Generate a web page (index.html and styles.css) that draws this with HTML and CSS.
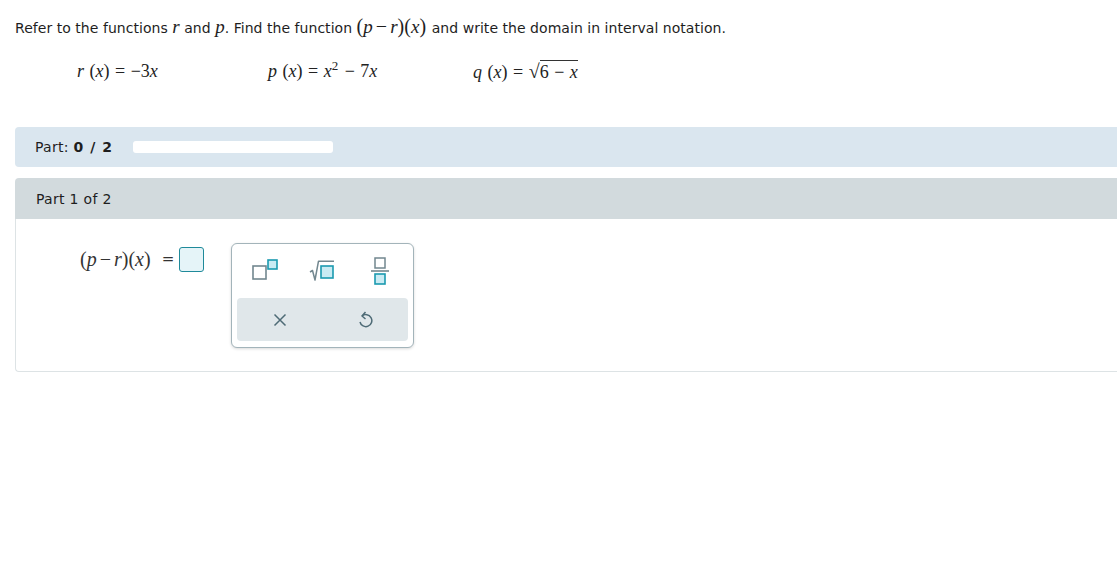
FILE: index.html
```html
<!DOCTYPE html>
<html>
<head>
<meta charset="utf-8">
<link rel="stylesheet" href="styles.css">
</head>
<body>
<div class="page">
  <p class="prompt">Refer to the functions <span class="mi">r</span> and <span class="mi">p</span>. Find the function <span class="m">(<span class="mi">p</span><span class="op">−</span><span class="mi">r</span>)(<span class="mi">x</span>)</span> and write the domain in interval notation.</p>

  <div class="eqs">
    <div class="eq eq1"><i>r</i> (<i>x</i>) = −3<i>x</i></div>
    <div class="eq eq2"><i>p</i> (<i>x</i>) = <i>x</i><sup>2</sup> − 7<i>x</i></div>
    <div class="eq eq3"><i>q</i> (<i>x</i>) = <span class="rad">√</span><span class="radicand">6 − <i>x</i></span></div>
  </div>

  <div class="partbar">
    <span class="partlabel">Part: <b>0 / 2</b></span>
    <span class="progress"></span>
  </div>

  <div class="part">
    <div class="parthead">Part 1 of 2</div>
    <div class="partbody">
      <div class="answer">
        <span class="lhs">(<i>p</i><span class="op">−</span><i>r</i>)(<i>x</i>)</span>
        <span class="eqsign">=</span>
        <span class="inbox"></span>
      </div>
      <div class="keypad">
        <div class="keys">
          <span class="key">
            <svg width="28" height="24" viewBox="0 0 28 24">
              <rect x="1" y="7" width="13" height="13" fill="#fff" stroke="#72878f" stroke-width="1.6"/>
              <rect x="16" y="1" width="9" height="9" fill="#c9ebf3" stroke="#1b9ab0" stroke-width="1.6"/>
            </svg>
          </span>
          <span class="key">
            <svg width="28" height="24" viewBox="0 0 28 24">
              <path d="M1 13 L3.5 11.5 L6 21 L9.5 2.2 L25 2.2" fill="none" stroke="#72878f" stroke-width="1.5" stroke-linejoin="round"/>
              <rect x="12" y="7" width="12" height="12" fill="#c9ebf3" stroke="#1b9ab0" stroke-width="1.6"/>
            </svg>
          </span>
          <span class="key">
            <svg width="20" height="28" viewBox="0 0 20 28">
              <rect x="5" y="1" width="10" height="10" fill="#fff" stroke="#72878f" stroke-width="1.5"/>
              <line x1="1" y1="14" x2="19" y2="14" stroke="#72878f" stroke-width="1.6"/>
              <rect x="5" y="17" width="10" height="10" fill="#c9ebf3" stroke="#1b9ab0" stroke-width="1.6"/>
            </svg>
          </span>
        </div>
        <div class="tools">
          <span class="tool">
            <svg width="14" height="14" viewBox="0 0 14 14">
              <path d="M1.5 1.5 L12.5 12.5 M12.5 1.5 L1.5 12.5" stroke="#4e6b76" stroke-width="1.5" fill="none"/>
            </svg>
          </span>
          <span class="tool">
            <svg width="16" height="18" viewBox="0 0 16 18">
              <path d="M5 5 A6 6 0 1 1 3 11" fill="none" stroke="#4e6b76" stroke-width="1.5"/>
              <path d="M8.5 1 L5 5 L8.5 8" fill="none" stroke="#4e6b76" stroke-width="1.5" stroke-linejoin="round"/>
            </svg>
          </span>
        </div>
      </div>
    </div>
  </div>
</div>
</body>
</html>
```

FILE: styles.css
```css
html, body {
  margin: 0;
  padding: 0;
  background: #ffffff;
  overflow: hidden;
}

body {
  width: 1117px;
  height: 583px;
  font-family: "DejaVu Sans", Verdana, sans-serif;
  color: #222;
}

.page {
  padding-left: 15px;
  width: 1120px;
}

.prompt {
  margin: 0;
  padding-top: 16px;
  font-size: 14px;
  line-height: 20px;
  letter-spacing: 0.04px;
  color: #1e1e1e;
}

.mi {
  font-family: "Liberation Serif", "DejaVu Serif", serif;
  font-style: italic;
  font-size: 19px;
}

.m {
  font-family: "Liberation Serif", "DejaVu Serif", serif;
  font-size: 20px;
  margin-right: 1px;
}

.op {
  margin: 0 3px;
}

.eqs {
  display: flex;
  padding-left: 62px;
  margin-top: 20px;
  height: 26px;
  font-family: "Liberation Serif", "DejaVu Serif", serif;
  font-size: 18px;
  line-height: 26px;
  word-spacing: 1px;
  color: #222;
}

.eq i {
  font-style: italic;
}

.eq1 { width: 191px; }
.eq2 { width: 205px; }

.eq sup {
  font-size: 13px;
  vertical-align: 7px;
  line-height: 0;
  margin-left: 0;
  margin-right: 1px;
}

.rad {
  font-size: 20px;
}

.radicand {
  border-top: 1px solid #333;
  padding-top: 1px;
}

.partbar {
  margin-top: 43px;
  height: 40px;
  background: #dae6ef;
  border-radius: 4px 0 0 4px;
  display: flex;
  align-items: center;
  padding-left: 20px;
  font-size: 14px;
  color: #1e1e1e;
}

.partlabel {
  letter-spacing: 0.3px;
}

.partlabel b {
  font-weight: bold;
  letter-spacing: 1px;
}

.progress {
  margin-left: 20px;
  width: 200px;
  height: 12px;
  background: #ffffff;
  border-radius: 3px;
}

.part {
  margin-top: 11px;
}

.parthead {
  height: 41px;
  background: #d2dadd;
  border-radius: 4px 0 0 0;
  display: flex;
  align-items: center;
  padding-left: 21px;
  font-size: 14px;
  letter-spacing: 0.3px;
  color: #1e1e1e;
}

.partbody {
  height: 153px;
  border-left: 1px solid #dde3e5;
  border-bottom: 1px solid #dde3e5;
  border-radius: 0 0 0 4px;
  display: flex;
  align-items: flex-start;
  padding-top: 24px;
  box-sizing: border-box;
}

.answer {
  display: flex;
  align-items: center;
  margin-left: 64px;
  margin-top: 3px;
  height: 26px;
}

.lhs {
  font-family: "Liberation Serif", "DejaVu Serif", serif;
  font-size: 20px;
  color: #333;
}

.lhs i { font-style: italic; }

.eqsign {
  margin-left: 11px;
  font-size: 15px;
  color: #333;
}

.inbox {
  margin-left: 5px;
  width: 23px;
  height: 23px;
  border: 1px solid #1f8a9a;
  background: #e5f4f8;
  border-radius: 3px;
}

.keypad {
  margin-left: 27px;
  width: 183px;
  height: 105px;
  box-sizing: border-box;
  border: 1px solid #a3b4ba;
  border-radius: 6px;
  box-shadow: 0 1px 3px rgba(0,0,0,0.15);
  background: #fff;
  display: flex;
  flex-direction: column;
  padding: 0 5px 6px 5px;
}

.keys {
  height: 54px;
  display: flex;
  align-items: center;
}

.key {
  width: 57px;
  display: flex;
  justify-content: center;
}

.tools {
  flex: 1;
  background: #e0e7ea;
  border-radius: 4px;
  display: flex;
  align-items: center;
}

.tool {
  flex: 1;
  display: flex;
  justify-content: center;
}
```
